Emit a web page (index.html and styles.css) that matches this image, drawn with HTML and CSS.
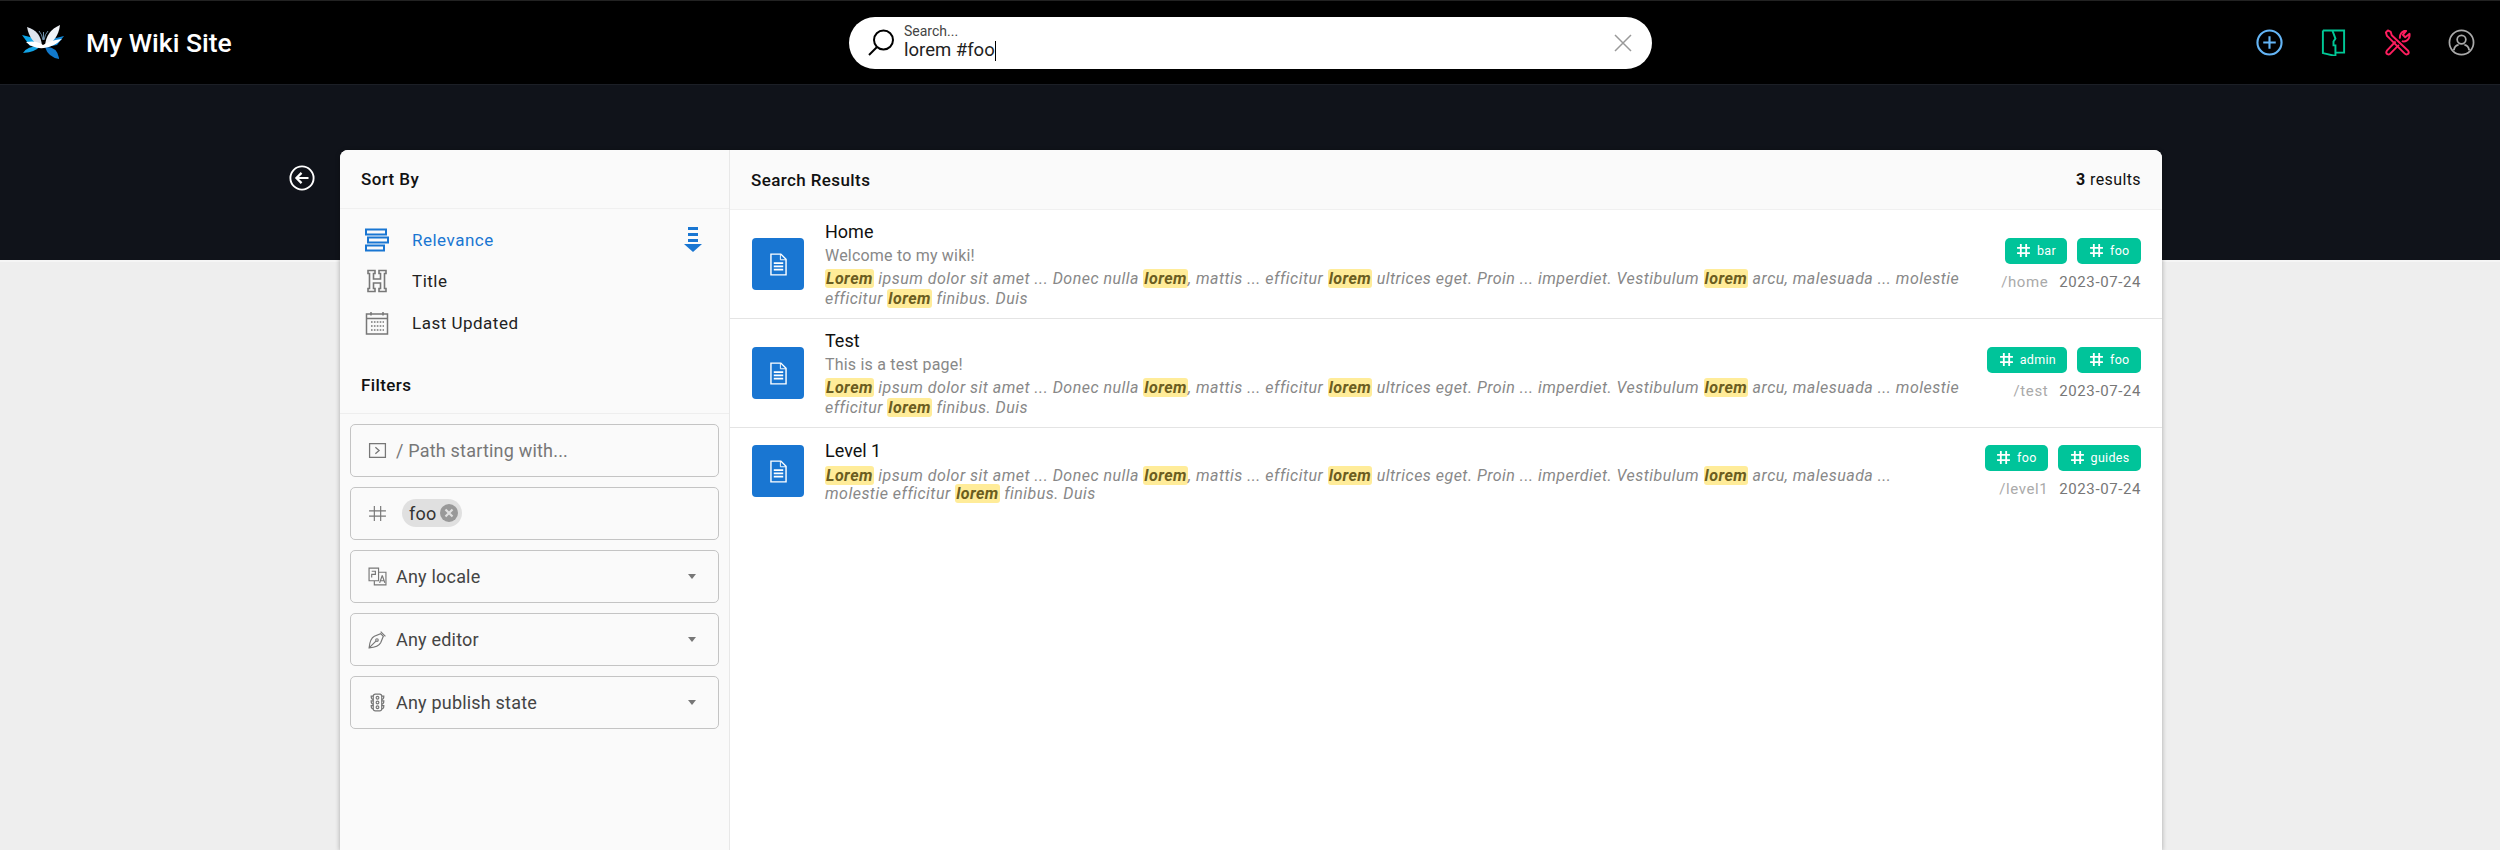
FILE: index.html
```html
<!DOCTYPE html>
<html>
<head>
  <link rel="stylesheet" href="styles.css">
</head>
<body>
  <div class="header">
    <div class="brand">
      <svg class="logo" viewBox="0 0 44 36">
        <path d="M1 10 L13 13 L20 22 L9 21 Z" fill="#0aa5e8"/>
        <path d="M43 11 L31 14 L25 22 L36 20 Z" fill="#1287d6"/>
        <path d="M2 28 Q6 21 19 21 Q15 27 2 28 Z" fill="#12a3e6"/>
        <path d="M24 22 Q36 21 38 33 L38 34 Q27 32 24 22 Z" fill="#1179cc"/>
        <path d="M6 2 Q20 6 21 21 Q9 18 6 2 Z" fill="#dfe5ee"/>
        <path d="M39 0 Q25 6 24 21 Q37 16 39 0 Z" fill="#f2f4f8"/>
        <path d="M5 17 Q16 15 22 20 Q30 15 41 14 Q33 22 23 23 Q12 24 5 17 Z" fill="#fff"/>
        <path d="M22 15 Q21 9 18 6 M23 15 Q24 9 27 6 M22.500 15 V7" stroke="#6d8fa8" fill="none"/>
      </svg>
      <span class="site-title">My Wiki Site</span>
    </div>
    <div class="search">
      <svg class="search-icon" viewBox="0 0 28 28" fill="none" stroke="#000" stroke-width="2">
        <circle cx="16.500" cy="11" r="9.500"/>
        <path d="M10 18 L2 26"/>
      </svg>
      <div class="search-text">
        <label>Search...</label>
        <div class="search-value">lorem #foo<span class="caret"></span></div>
      </div>
      <svg class="search-clear" viewBox="0 0 18 18" fill="none" stroke="#999" stroke-width="1.500">
        <path d="M1 1 L17 17 M17 1 L1 17"/>
      </svg>
    </div>
    <div class="header-actions">
      <svg viewBox="0 0 28 28" fill="none" stroke="#64b5f6" stroke-width="2.200">
        <circle cx="14" cy="14" r="12.500"/>
        <path d="M14 7.500 V20.500 M7.500 14 H20.500"/>
      </svg>
      <svg viewBox="0 0 28 28" fill="none" stroke="#00c896" stroke-width="2">
        <path d="M3 1.500 H25 V24.500 H16"/>
        <path d="M3 1.500 V25 L16 28 V17 H14 V13 L16 10 L13 2"/>
      </svg>
      <svg viewBox="0 0 28 28" fill="none" stroke="#ff1e5f" stroke-width="2" stroke-linejoin="round">
        <path d="M2 3.500 L4 1.500 L7 3 L8 6.500 L25 22.500 Q26.500 25 24.500 26 Q23 27 21 25 L5 9 L3 7 Z" />
        <path d="M12 13 L3 22.500 Q1.500 25 3.500 26 Q5.500 27 7 25 L15.500 16.500 M16.500 10 Q16 4 21 2 L23 2 L19.500 6 L22 8.500 L26.500 5 Q27 10 23.500 12 Q21 13.500 18.500 12.500"/>
      </svg>
      <svg viewBox="0 0 28 28" fill="none" stroke="#aaa" stroke-width="1.800">
        <circle cx="14" cy="14" r="12.500"/>
        <circle cx="14" cy="11" r="4.500"/>
        <path d="M6 22 Q7 17 11 16.500 M22 22 Q21 17 17 16.500"/>
      </svg>
    </div>
  </div>

  <div class="main">
    <svg class="back" viewBox="0 0 28 28" fill="none" stroke="#fff" stroke-width="2">
      <circle cx="14" cy="14" r="12.500"/>
      <path d="M21 14 H8 M13.500 8.500 L8 14 L13.500 19.500" stroke-width="2.400"/>
    </svg>

    <div class="card">
      <div class="sidebar">
        <div class="section-title">Sort By</div>
        <div class="sort-list">
          <div class="sort-item active">
            <svg viewBox="0 0 24 24" fill="none" stroke="#1976d2" stroke-width="2">
              <rect x="1" y="1.500" width="20" height="5"/>
              <rect x="3" y="9.500" width="20" height="5"/>
              <rect x="1" y="17.500" width="18" height="5"/>
            </svg>
            <span>Relevance</span>
            <svg class="sort-dir" viewBox="0 0 18 26" fill="#1976d2">
              <rect x="4" y="0" width="10" height="3"/>
              <rect x="4" y="6" width="10" height="3"/>
              <rect x="4" y="12" width="10" height="3"/>
              <path d="M0 17 H18 L9 25 Z"/>
            </svg>
          </div>
          <div class="sort-item">
            <svg viewBox="0 0 24 24" fill="none" stroke="#777" stroke-width="1.600">
              <path d="M3 1.500 H10 V4.500 H8.500 V10 H15.500 V4.500 H14 V1.500 H21 V4.500 H19.500 V19.500 H21 V22.500 H14 V19.500 H15.500 V14 H8.500 V19.500 H10 V22.500 H3 V19.500 H4.500 V4.500 H3 Z"/>
            </svg>
            <span>Title</span>
          </div>
          <div class="sort-item">
            <svg viewBox="0 0 24 24" fill="none" stroke="#777" stroke-width="1.500">
              <path d="M1.500 3 H22.500 V23 H1.500 Z M1.500 7.500 H22.500"/>
              <path d="M6 1 V4.500 M18 1 V4.500"/>
              <path d="M6 11 H19 M6 15 H19 M6 19 H19" stroke-width="1.600" stroke-dasharray="1.600 1.300"/>
            </svg>
            <span>Last Updated</span>
          </div>
        </div>

        <div class="section-title filters-title">Filters</div>
        <div class="filters">
          <div class="field">
            <svg viewBox="0 0 18 18" fill="none" stroke="#777" stroke-width="1.200">
              <rect x="1.500" y="2.500" width="15" height="13"/>
              <path d="M7 6 L10.500 9 L7 12"/>
            </svg>
            <span class="placeholder">/ Path starting with...</span>
          </div>
          <div class="field">
            <svg viewBox="0 0 18 18" fill="none" stroke="#777" stroke-width="1.100">
              <path d="M6 2 V16 M12 2 V16 M1 6.500 H17 M1 11.500 H17"/>
            </svg>
            <span class="chip">foo
              <svg class="chip-remove" viewBox="0 0 18 18">
                <circle cx="9" cy="9" r="9" fill="#999"/>
                <path d="M5.500 5.500 L12.500 12.500 M12.500 5.500 L5.500 12.500" stroke="#e0e0e0" stroke-width="2.200"/>
              </svg>
            </span>
          </div>
          <div class="field">
            <svg viewBox="0 0 18 18" fill="none" stroke="#777" stroke-width="1.100">
              <path d="M1 1 H10 V13 H1 Z M10 5 H17 V17 H6 V13"/>
              <path d="M3.500 4 H7 V7 H3.500 V10 M13.500 8 L11 15 M13.500 8 L16 15 M11.800 13 H15.200"/>
            </svg>
            <span>Any locale</span>
            <span class="arrow"></span>
          </div>
          <div class="field">
            <svg viewBox="0 0 18 18" fill="none" stroke="#777" stroke-width="1.100">
              <path d="M1 17 Q2 8 6 6 L12 3.500 L14.500 6 L12 12 Q10 16 1 17 Z M1 17 L7.500 10.500"/>
              <circle cx="8.500" cy="9.500" r="1.200"/>
              <path d="M12 1.500 L16.500 6"/>
            </svg>
            <span>Any editor</span>
            <span class="arrow"></span>
          </div>
          <div class="field">
            <svg viewBox="0 0 18 18" fill="none" stroke="#777" stroke-width="1.100">
              <rect x="5" y="1" width="8" height="16" rx="2"/>
              <circle cx="9" cy="4.500" r="1.300"/>
              <circle cx="9" cy="9" r="1.300"/>
              <circle cx="9" cy="13.500" r="1.300"/>
              <path d="M5 3 H3 Q3 6 5 6 M5 7.500 H3 Q3 10.500 5 10.500 M5 12 H3 Q3 15 5 15 M13 3 H15 Q15 6 13 6 M13 7.500 H15 Q15 10.500 13 10.500 M13 12 H15 Q15 15 13 15"/>
            </svg>
            <span>Any publish state</span>
            <span class="arrow"></span>
          </div>
        </div>
      </div>

      <div class="results">
        <div class="results-header">
          <div class="section-title">Search Results</div>
          <div class="results-count"><b>3</b> results</div>
        </div>

        <div class="result">
          <div class="doc-icon">
            <svg viewBox="0 0 18 24" fill="none" stroke="#fff" stroke-width="1.500">
              <path d="M1 1 H11.500 L17 6.500 V23 H1 Z"/>
              <path d="M11 1 V7 H17" stroke-width="1"/>
              <path d="M4 10.500 H14 M4 14 H14 M4 17.500 H14" stroke-width="1.800"/>
            </svg>
          </div>
          <div class="result-body">
            <div class="result-title">Home</div>
            <div class="result-desc">Welcome to my wiki!</div>
            <div class="result-excerpt"><mark>Lorem</mark> ipsum dolor sit amet ... Donec nulla <mark>lorem</mark>, mattis ... efficitur <mark>lorem</mark> ultrices eget. Proin ... imperdiet. Vestibulum <mark>lorem</mark> arcu, malesuada ... molestie efficitur <mark>lorem</mark> finibus. Duis</div>
          </div>
          <div class="result-meta">
            <div class="tags">
              <span class="tag"><svg viewBox="0 0 14 14"><path d="M4.500 1 V13 M9.500 1 V13 M1 4.500 H13 M1 9.500 H13"/></svg>bar</span>
              <span class="tag"><svg viewBox="0 0 14 14"><path d="M4.500 1 V13 M9.500 1 V13 M1 4.500 H13 M1 9.500 H13"/></svg>foo</span>
            </div>
            <div class="path-date"><span class="path">/home</span><span>2023-07-24</span></div>
          </div>
        </div>

        <div class="result">
          <div class="doc-icon">
            <svg viewBox="0 0 18 24" fill="none" stroke="#fff" stroke-width="1.500">
              <path d="M1 1 H11.500 L17 6.500 V23 H1 Z"/>
              <path d="M11 1 V7 H17" stroke-width="1"/>
              <path d="M4 10.500 H14 M4 14 H14 M4 17.500 H14" stroke-width="1.800"/>
            </svg>
          </div>
          <div class="result-body">
            <div class="result-title">Test</div>
            <div class="result-desc">This is a test page!</div>
            <div class="result-excerpt"><mark>Lorem</mark> ipsum dolor sit amet ... Donec nulla <mark>lorem</mark>, mattis ... efficitur <mark>lorem</mark> ultrices eget. Proin ... imperdiet. Vestibulum <mark>lorem</mark> arcu, malesuada ... molestie efficitur <mark>lorem</mark> finibus. Duis</div>
          </div>
          <div class="result-meta">
            <div class="tags">
              <span class="tag"><svg viewBox="0 0 14 14"><path d="M4.500 1 V13 M9.500 1 V13 M1 4.500 H13 M1 9.500 H13"/></svg>admin</span>
              <span class="tag"><svg viewBox="0 0 14 14"><path d="M4.500 1 V13 M9.500 1 V13 M1 4.500 H13 M1 9.500 H13"/></svg>foo</span>
            </div>
            <div class="path-date"><span class="path">/test</span><span>2023-07-24</span></div>
          </div>
        </div>

        <div class="result last">
          <div class="doc-icon">
            <svg viewBox="0 0 18 24" fill="none" stroke="#fff" stroke-width="1.500">
              <path d="M1 1 H11.500 L17 6.500 V23 H1 Z"/>
              <path d="M11 1 V7 H17" stroke-width="1"/>
              <path d="M4 10.500 H14 M4 14 H14 M4 17.500 H14" stroke-width="1.800"/>
            </svg>
          </div>
          <div class="result-body">
            <div class="result-title">Level 1</div>
            <div class="result-excerpt"><mark>Lorem</mark> ipsum dolor sit amet ... Donec nulla <mark>lorem</mark>, mattis ... efficitur <mark>lorem</mark> ultrices eget. Proin ... imperdiet. Vestibulum <mark>lorem</mark> arcu, malesuada ... molestie efficitur <mark>lorem</mark> finibus. Duis</div>
          </div>
          <div class="result-meta">
            <div class="tags">
              <span class="tag"><svg viewBox="0 0 14 14"><path d="M4.500 1 V13 M9.500 1 V13 M1 4.500 H13 M1 9.500 H13"/></svg>foo</span>
              <span class="tag"><svg viewBox="0 0 14 14"><path d="M4.500 1 V13 M9.500 1 V13 M1 4.500 H13 M1 9.500 H13"/></svg>guides</span>
            </div>
            <div class="path-date"><span class="path">/level1</span><span>2023-07-24</span></div>
          </div>
        </div>
      </div>
    </div>
  </div>
</body>
</html>
```

FILE: styles.css
```css
* {
  box-sizing: border-box;
  margin: 0;
  padding: 0;
}

html, body {
  height: 850px;
  overflow: hidden;
}

body {
  font-family: Roboto, sans-serif;
  background: #eeeeee;
  color: #111;
}

svg {
  display: block;
  flex: none;
}

/* top bar */
.header {
  height: 85px;
  background: #000;
  border-top: 1px solid #222;
  border-bottom: 1px solid #1c1f26;
  display: grid;
  grid-template-columns: 849px 803px 1fr;
  align-items: center;
}

.brand {
  display: flex;
  align-items: center;
  padding-left: 21px;
  gap: 21px;
}

.logo {
  width: 44px;
  height: 36px;
}

.site-title {
  color: #fff;
  font-size: 26.500px;
  font-weight: 500;
}

.search {
  height: 52px;
  background: #fff;
  border-radius: 26px;
  display: flex;
  align-items: center;
  padding: 0 20px 0 18px;
}

.search-icon {
  width: 28px;
  height: 28px;
}

.search-text {
  flex: 1;
  margin-left: 9px;
  padding-top: 1px;
}

.search-text label {
  display: block;
  font-size: 14px;
  line-height: 15px;
  color: #444;
}

.search-value {
  display: flex;
  align-items: center;
  font-size: 18.500px;
  line-height: 23px;
  color: #222;
}

.caret {
  width: 1px;
  height: 20px;
  background: #000;
}

.search-clear {
  width: 18px;
  height: 18px;
}

.header-actions {
  display: flex;
  justify-content: flex-end;
  gap: 37px;
  padding-right: 25px;
}

.header-actions svg {
  width: 27px;
  height: 27px;
}

/* page */
.main {
  height: 764px;
  background: linear-gradient(#10131a 175px, #f5f5f5 175px, #f5f5f5 177px, #eeeeee 177px);
  display: flex;
  align-items: flex-start;
  padding: 65px 338px 0 289px;
}

.back {
  width: 26px;
  height: 26px;
  margin: 15px 25px 0 0;
}

.card {
  flex: 1;
  height: 700px;
  background: #fff;
  border-radius: 8px 8px 0 0;
  box-shadow: 0 1px 5px rgba(0,0,0,0.3);
  display: flex;
  overflow: hidden;
}

.sidebar {
  width: 390px;
  background: #fafafa;
  border-right: 1px solid #e8e8e8;
}

.section-title {
  font-size: 17px;
  font-weight: 500;
  letter-spacing: 0.4px;
  color: #111;
  height: 59px;
  line-height: 58px;
  padding-left: 21px;
  border-bottom: 1px solid #f0f0f0;
}

.sort-list {
  padding: 10px 0 0 25px;
}

.sort-item {
  height: 41.500px;
  display: flex;
  align-items: center;
  font-size: 17px;
  letter-spacing: 0.5px;
  color: #222;
}

.sort-item svg {
  width: 24px;
  height: 24px;
}

.sort-item span {
  margin-left: 23px;
  flex: 1;
}

.sort-item svg.sort-dir {
  width: 18px;
  height: 26px;
  margin-right: 27px;
}

.sort-item.active {
  color: #1976d2;
}

.filters-title {
  margin-top: 15px;
  height: 55px;
  line-height: 52px;
  padding-left: 21px;
  border-bottom: 1px solid #eee;
}

.filters {
  padding: 10px 10px 0 10px;
  display: flex;
  flex-direction: column;
  gap: 10px;
}

.field {
  height: 53px;
  border: 1px solid #c4c4c4;
  border-radius: 5px;
  display: flex;
  align-items: center;
  padding: 0 21px 0 17px;
  font-size: 18px;
  letter-spacing: 0.2px;
  color: #444;
  gap: 9px;
}

.field svg {
  width: 19px;
  height: 19px;
}

.placeholder {
  color: #777;
}

.chip {
  display: flex;
  align-items: center;
  gap: 4px;
  height: 28px;
  margin-left: 6px;
  padding: 0 4px 0 7px;
  background: #e0e0e0;
  border-radius: 14px;
  color: #333;
}

.field .chip-remove {
  width: 18px;
  height: 18px;
}

.arrow {
  margin-left: auto;
  margin-right: 1px;
  border-left: 4.500px solid transparent;
  border-right: 4.500px solid transparent;
  border-top: 5px solid #777;
}

/* results */
.results {
  flex: 1;
  min-width: 0;
}

.results-header {
  display: flex;
  justify-content: space-between;
  align-items: center;
  height: 59px;
  padding-right: 21px;
  background: #fafafa;
  border-bottom: 1px solid #f0f0f0;
  box-sizing: content-box;
}

.results-header .section-title {
  border: 0;
  padding-left: 21px;
  height: auto;
  line-height: normal;
}

.results-count {
  font-size: 16px;
  letter-spacing: 0.4px;
}

.results-count b {
  font-weight: 700;
}

.result {
  display: flex;
  align-items: center;
  height: 109px;
  padding: 0 21px 0 22px;
  border-bottom: 1px solid #e4e4e4;
}

.result.last {
  height: 86px;
  border-bottom: 0;
}

.doc-icon {
  width: 52px;
  height: 52px;
  background: #1976d2;
  border-radius: 4px;
  display: flex;
  align-items: center;
  justify-content: center;
}

.doc-icon svg {
  width: 17px;
  height: 23px;
}

.result-body {
  flex: 1;
  min-width: 0;
  padding: 0 27px 0 21px;
}

.result-title {
  font-size: 18px;
  line-height: 24px;
  color: #111;
}

.result-desc {
  font-size: 16px;
  line-height: 24px;
  letter-spacing: 0.2px;
  color: #888;
}

.result-excerpt {
  padding-top: 1px;
  font-size: 16px;
  line-height: 20px;
  letter-spacing: 0.48px;
  font-style: italic;
  color: #888;
}

.last .result-excerpt {
  line-height: 18.500px;
  padding-top: 4px;
}

mark {
  padding: 0 1px;
  background: #ffec99;
  color: #6b5d20;
  font-weight: 700;
  border-radius: 3px;
}

.result-meta {
  flex: none;
  display: flex;
  flex-direction: column;
  align-items: flex-end;
  gap: 9px;
}

.tags {
  display: flex;
  gap: 10px;
}

.tag {
  height: 26px;
  display: flex;
  align-items: center;
  gap: 6px;
  padding: 0 11.500px;
  background: #00c49a;
  border-radius: 5px;
  color: #fff;
  font-size: 12.500px;
  letter-spacing: 0.3px;
}

.tag svg {
  width: 15px;
  height: 15px;
  fill: none;
  stroke: #fff;
  stroke-width: 1.700;
}

.path-date {
  display: flex;
  gap: 11px;
  font-size: 15px;
  letter-spacing: 0.6px;
  color: #777;
}

.path {
  color: #aaa;
}
```
